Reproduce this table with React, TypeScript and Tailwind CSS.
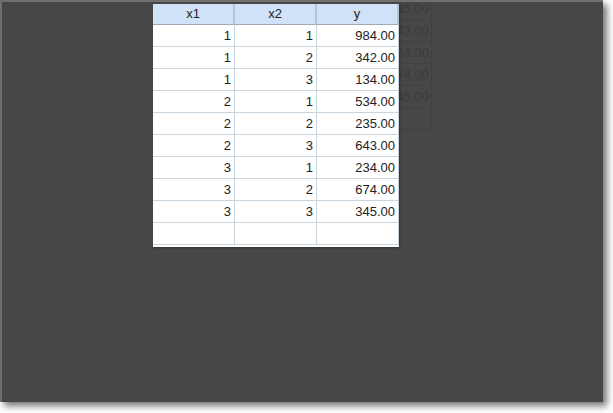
const rows: [number, number, string][] = [
  [1, 1, '984.00'],
  [1, 2, '342.00'],
  [1, 3, '134.00'],
  [2, 1, '534.00'],
  [2, 2, '235.00'],
  [2, 3, '643.00'],
  [3, 1, '234.00'],
  [3, 2, '674.00'],
  [3, 3, '345.00'],
];

const ghost = ['235.00', '643.00', '234.00', '674.00', '345.00', ''];

const cell = 'h-[22px] border-b border-r border-[#c8d4de] bg-white pr-[3px] text-right leading-[22px]';

export default function App() {
  return (
    <div className="h-[413px] w-[613px] overflow-hidden bg-white">
      <div
        className="relative h-[402px] w-[603px] overflow-hidden border-l-2 border-t-2 border-[#6f6f6f] bg-[#474747] shadow-[4px_4px_7px_rgba(0,0,0,0.55)]"
        style={{ fontFamily: '"Liberation Sans", Arial, sans-serif' }}
      >
        {/* faded table lying under the real one */}
        <div className="absolute left-[348px] top-[-4px] w-[82px] border-r border-[#414141] text-[13px] text-[#3b3b3b]">
          {ghost.map((v, i) => (
            <div key={i} className="h-[22px] border-b border-[#414141] pr-[2px] text-right leading-[21px]">
              {v}
            </div>
          ))}
        </div>

        <div className="pl-[151px] pt-[2px]">
          <div className="relative grid w-[246px] grid-cols-[82px_82px_82px] text-[13px] text-[#222222] shadow-[1px_1px_2px_rgba(0,0,0,0.3)]">
            {['x1', 'x2', 'y'].map((h) => (
              <div
                key={h}
                className="h-[21px] border-b border-r-2 border-b-[#9fa9b3] border-r-[#b9c4cf] bg-[#cfe2f7] text-center leading-[20px]"
              >
                {h}
              </div>
            ))}
            {rows.map(([a, b, y], i) => (
              <div key={i} className="contents">
                <div className={cell}>{a}</div>
                <div className={cell}>{b}</div>
                <div className={cell}>{y}</div>
              </div>
            ))}
            <div className={cell} />
            <div className={cell} />
            <div className={cell} />
            <div className="col-span-3 h-[2px] bg-white" />
          </div>
        </div>
      </div>
    </div>
  );
}
